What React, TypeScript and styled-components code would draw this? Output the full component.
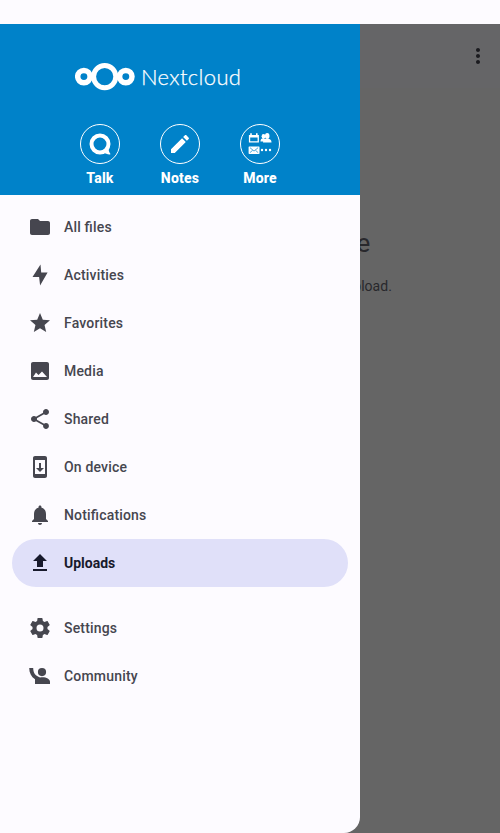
import React from "react";
import styled, { createGlobalStyle } from "styled-components";

const GlobalStyle = createGlobalStyle`
  * { box-sizing: border-box; }
  body { margin: 0; background: #fdfbff; font-family: Roboto, sans-serif; }
`;

const Screen = styled.div`
  display: flex;
  flex-direction: column;
  width: 500px;
  height: 833px;
  overflow: hidden;
`;

const StatusBar = styled.div`
  height: 24px;
  flex: none;
  background: #fdfbff;
`;

const Body = styled.div`
  position: relative;
  flex: 1;
  background: #656565;
  color: #1b1b1f;
`;

const Toolbar = styled.div`
  height: 64px;
  display: flex;
  justify-content: flex-end;
  align-items: center;
  padding-right: 10px;
  background: #656567;
`;

const EmptyState = styled.div`
  display: flex;
  flex-direction: column;
  align-items: center;
  padding-top: 139px;
  white-space: nowrap;
`;

const EmptyTitle = styled.div`
  font-size: 26px;
  line-height: 32px;
  color: #28282c;
`;

const EmptyText = styled.div`
  margin-top: 17px;
  font-size: 14px;
  line-height: 20px;
  letter-spacing: 0.02px;
  color: #28282c;
`;

const Drawer = styled.aside`
  position: absolute;
  top: 0;
  left: 0;
  bottom: 0;
  width: 360px;
  overflow: hidden;
  background: #fdfbff;
  border-bottom-right-radius: 16px;
`;

const Header = styled.header`
  height: 171px;
  background: #0082c9;
  color: #fff;
  display: flex;
  flex-direction: column;
  align-items: center;
`;

const Brand = styled.div`
  display: flex;
  align-items: center;
  width: 210px;
  height: 28px;
  margin-top: 39px;
`;

const BrandName = styled.span`
  margin-left: 6px;
  font-family: Lato, sans-serif;
  font-weight: 300;
  font-size: 22px;
  line-height: 26px;
  letter-spacing: 0.35px;
  -webkit-text-stroke: 0.25px #fff;
`;

const Apps = styled.div`
  display: flex;
  margin-top: 33px;
`;

const AppLink = styled.div`
  width: 80px;
  display: flex;
  flex-direction: column;
  align-items: center;
  font-size: 14px;
  font-weight: 800;
  line-height: 16px;
  letter-spacing: 0.2px;
`;

const AppCircle = styled.div`
  width: 40px;
  height: 40px;
  margin-bottom: 6px;
  border: 1px solid #fff;
  border-radius: 50%;
  display: flex;
  align-items: center;
  justify-content: center;
`;

const Menu = styled.nav`
  padding: 8px 12px;
`;

const MenuItem = styled.div<{ $active?: boolean; $gap?: boolean }>`
  height: 48px;
  margin-top: ${(p) => (p.$gap ? "17px" : "0")};
  padding-left: 16px;
  display: flex;
  align-items: center;
  gap: 12px;
  border-radius: 24px;
  font-size: 14px;
  line-height: 20px;
  font-feature-settings: "liga" 1;
  letter-spacing: ${(p) => (p.$active ? "0" : "0.18px")};
  font-weight: ${(p) => (p.$active ? 700 : 500)};
  color: ${(p) => (p.$active ? "#181a2c" : "#46464f")};
  background: ${(p) => (p.$active ? "#e0e0f9" : "transparent")};
`;

const Icon = ({ d, size = 24 }: { d: string; size?: number }) => (
  <svg width={size} height={size} viewBox="0 0 24 24" fill="currentColor">
    <path d={d} />
  </svg>
);

const CloudLogo = () => (
  <svg width="60" height="28" viewBox="0 0 60 28" fill="none" stroke="#fff">
    <circle cx="8.9" cy="13.6" r="6.2" strokeWidth="5.5" />
    <circle cx="29.7" cy="13.6" r="11.1" strokeWidth="5" />
    <circle cx="50.8" cy="13.6" r="6.2" strokeWidth="5.5" />
  </svg>
);

const TalkIcon = () => (
  <svg width="24" height="24" viewBox="0 0 24 24" fill="none">
    <circle cx="12" cy="12" r="8.5" stroke="#fff" strokeWidth="4" />
    <path
      d="M20.5 15.5c0 3.2.8 5 1.7 5.9.5.6.1 1-.5 1-2 .1-4.4-.6-6.2-2.1z"
      fill="#fff"
    />
  </svg>
);

const MoreIcon = () => (
  <svg width="24" height="24" viewBox="0 0 24 24" fill="#fff">
    <path
      fillRule="evenodd"
      d="M.9 3h1.3V1.3h1.6V3H8V1.3h1.6V3h1.3v7.5H.9zM2.2 5.6v3.6h7.4V5.6z"
    />
    <ellipse cx="15.5" cy="4.2" rx="1.9" ry="2.3" />
    <path d="M12.5 9.3c0-2 .8-2.6 3-3.2l2 1.2-1 2.2h-4z" />
    <ellipse cx="19.2" cy="4" rx="2.3" ry="2.9" />
    <path d="M15 10.6c0-2.5.8-3.1 3-3.9h2.4c2.3.7 3.1 1.4 3.1 3.9z" />
    <rect x="0.6" y="14.4" width="10.9" height="7.5" rx="0.6" />
    <path
      d="M2 15.7l4 3.4 4.1-3.4M1.9 20.7l2.7-2.4M10.2 20.7l-2.7-2.4"
      fill="none"
      stroke="#0082c9"
      strokeWidth="0.7"
    />
    <circle cx="14" cy="18" r="1.2" />
    <circle cx="18" cy="18" r="1.2" />
    <circle cx="22" cy="18" r="1.2" />
  </svg>
);

const EDIT =
  "M3 17.25V21h3.75L17.81 9.94l-3.75-3.75L3 17.25zM20.71 7.04c.39-.39.39-1.02 0-1.41l-2.34-2.34c-.39-.39-1.02-.39-1.41 0l-1.83 1.83 3.75 3.75 1.83-1.83z";

const DOTS =
  "M12 8c1.1 0 2-.9 2-2s-.9-2-2-2-2 .9-2 2 .9 2 2 2zm0 2c-1.1 0-2 .9-2 2s.9 2 2 2 2-.9 2-2-.9-2-2-2zm0 6c-1.1 0-2 .9-2 2s.9 2 2 2 2-.9 2-2-.9-2-2-2z";

const items = [
  {
    label: "All files",
    d: "M10 4H4c-1.1 0-1.99.9-1.99 2L2 18c0 1.1.9 2 2 2h16c1.1 0 2-.9 2-2V8c0-1.1-.9-2-2-2h-8l-2-2z",
  },
  { label: "Activities", d: "M12.5 1.5L4.5 14h6.6l1 8.6L19.6 9.6h-6.4z" },
  {
    label: "Favorites",
    d: "M12 17.27L18.18 21l-1.64-7.03L22 9.24l-7.19-.61L12 2 9.19 8.63 2 9.24l5.46 4.73L5.82 21z",
  },
  {
    label: "Media",
    d: "M21 19V5c0-1.1-.9-2-2-2H5c-1.1 0-2 .9-2 2v14c0 1.1.9 2 2 2h14c1.1 0 2-.9 2-2zM5 18l3-4.5 2.5 2.6L14 12.5 19 18z",
  },
  {
    label: "Shared",
    d: "M18 16.08c-.76 0-1.44.3-1.96.77L8.91 12.7c.05-.23.09-.46.09-.7s-.04-.47-.09-.7l7.05-4.11c.54.5 1.25.81 2.04.81 1.66 0 3-1.34 3-3s-1.34-3-3-3-3 1.34-3 3c0 .24.04.47.09.7L8.04 9.81C7.5 9.31 6.79 9 6 9c-1.66 0-3 1.34-3 3s1.34 3 3 3c.79 0 1.5-.31 2.04-.81l7.12 4.16c-.05.21-.08.43-.08.65 0 1.61 1.31 2.92 2.92 2.92s2.92-1.31 2.92-2.92-1.31-2.92-2.92-2.92z",
  },
  {
    label: "On device",
    d: "M17 1.01L7 1c-1.1 0-2 .9-2 2v18c0 1.1.9 2 2 2h10c1.1 0 2-.9 2-2V3c0-1.1-.9-1.99-2-1.99zM17 19H7V5h10v14zm-1-6h-3V8h-2v5H8l4 4 4-4z",
  },
  {
    label: "Notifications",
    d: "M12 22c1.1 0 2-.9 2-2h-4c0 1.1.89 2 2 2zm6-6v-5c0-3.07-1.64-5.64-4.5-6.32V4c0-.83-.67-1.5-1.5-1.5s-1.5.67-1.5 1.5v.68C7.63 5.36 6 7.92 6 11v5l-2 2v1h16v-1l-2-2z",
  },
  { label: "Uploads", active: true, d: "M9 16h6v-6h4l-7-7-7 7h4zm-4 2h14v2H5z" },
  {
    label: "Settings",
    gap: true,
    d: "M12 15.5A3.5 3.5 0 0 1 8.5 12 3.5 3.5 0 0 1 12 8.5a3.5 3.5 0 0 1 3.5 3.5 3.5 3.5 0 0 1-3.5 3.5m7.43-2.53c.04-.32.07-.64.07-.97s-.03-.66-.07-1l2.11-1.63c.19-.15.24-.42.12-.64l-2-3.46c-.12-.22-.39-.31-.61-.22l-2.49 1c-.52-.39-1.06-.73-1.69-.98l-.37-2.65A.506.506 0 0 0 14 2h-4c-.25 0-.46.18-.5.42l-.37 2.65c-.63.25-1.17.59-1.69.98l-2.49-1c-.22-.09-.49 0-.61.22l-2 3.46c-.13.22-.07.49.12.64L4.57 11c-.04.34-.07.67-.07 1s.03.65.07.97l-2.11 1.66c-.19.15-.25.42-.12.64l2 3.46c.12.22.39.3.61.22l2.49-1.01c.52.4 1.06.74 1.69.99l.37 2.65c.04.24.25.42.5.42h4c.25 0 .46-.18.5-.42l.37-2.65c.63-.26 1.17-.59 1.69-.99l2.49 1.01c.22.08.49 0 .61-.22l2-3.46c.12-.22.07-.49-.12-.64z",
  },
  {
    label: "Community",
    d: "M14 4a4.1 4.1 0 1 1 0 8.200 4.100 4.100 0 0 1 0-8.200M1.200 4H5.200c0 5.200 2.600 8 6.800 9.500 1-.2 1.500-.2 2.400-.2 4.200 0 7.600 2 7.600 4.500V20H7v-4.700C3.300 12.900 1.200 8.900 1.200 4z",
  },
];

export default function App() {
  return (
    <>
      <GlobalStyle />
      <Screen>
        <StatusBar />
        <Body>
          <Toolbar>
            <Icon d={DOTS} />
          </Toolbar>
          <EmptyState>
            <EmptyTitle>No uploads available</EmptyTitle>
            <EmptyText>Upload some content or activate auto upload.</EmptyText>
          </EmptyState>
          <Drawer>
            <Header>
              <Brand>
                <CloudLogo />
                <BrandName>Nextcloud</BrandName>
              </Brand>
              <Apps>
                <AppLink>
                  <AppCircle><TalkIcon /></AppCircle>
                  Talk
                </AppLink>
                <AppLink>
                  <AppCircle><Icon d={EDIT} /></AppCircle>
                  Notes
                </AppLink>
                <AppLink>
                  <AppCircle><MoreIcon /></AppCircle>
                  More
                </AppLink>
              </Apps>
            </Header>
            <Menu>
              {items.map((item) => (
                <MenuItem key={item.label} $active={item.active} $gap={item.gap}>
                  <Icon d={item.d} />
                  {item.label}
                </MenuItem>
              ))}
            </Menu>
          </Drawer>
        </Body>
      </Screen>
    </>
  );
}
